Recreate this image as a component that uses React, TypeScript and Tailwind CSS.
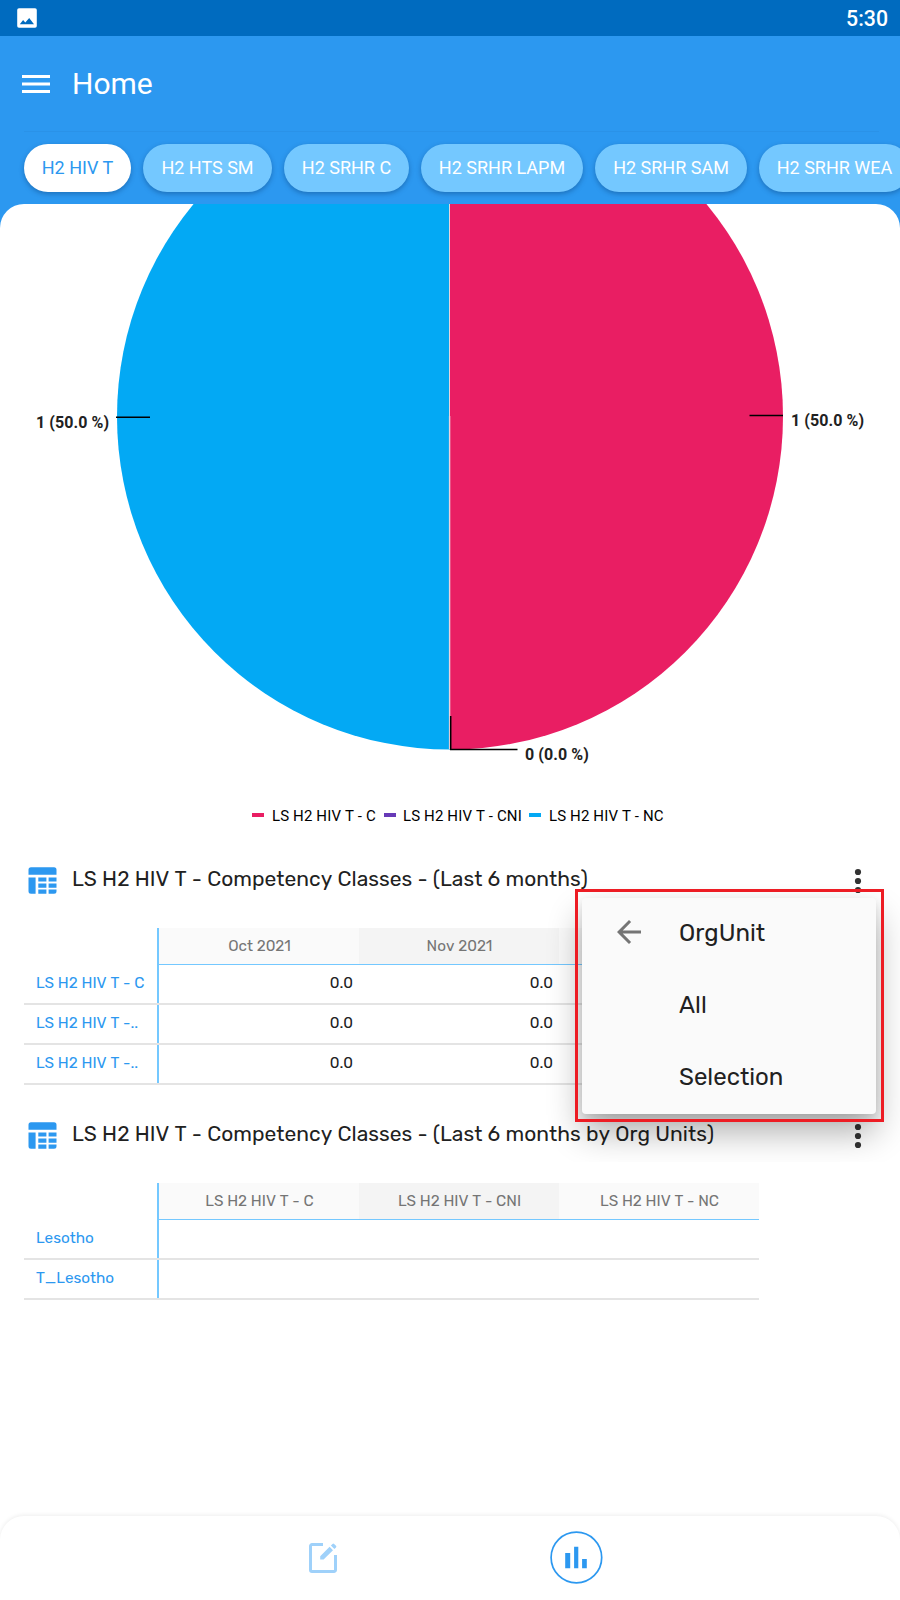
const tabs = [
  { label: "H2 HIV T", width: "w-[107px]", active: true },
  { label: "H2 HTS SM", width: "w-[129px]" },
  { label: "H2 SRHR C", width: "w-[125px]" },
  { label: "H2 SRHR LAPM", width: "w-[162px]" },
  { label: "H2 SRHR SAM", width: "w-[152px]" },
  { label: "H2 SRHR WEA", width: "w-[151px]" },
];

const legend = [
  { label: "LS H2 HIV T - C", color: "bg-[#e91e63]", gap: "mr-2", width: "w-[112px]" },
  { label: "LS H2 HIV T - CNI", color: "bg-[#673ab7]", gap: "mr-[7px]", width: "w-[126px]" },
  { label: "LS H2 HIV T - NC", color: "bg-[#03a9f4]", gap: "mr-2", width: "w-[120px]" },
];

function StatusBar() {
  return (
    <div className="flex h-9 items-center justify-between bg-[#006bbf] pl-[17px] pr-[12px] text-white">
      <svg className="h-5 w-5" viewBox="0 0 20 20">
        <rect x="0.2" y="0.2" width="19.6" height="19.6" rx="1.8" fill="#fff" />
        <path d="M2.8 16.2 6.1 12l2.2 2.5L12.2 10 17 16.2z" fill="#006bbf" />
      </svg>
      <span className="pt-[2px] text-[21.3px] font-medium leading-none">5:30</span>
    </div>
  );
}

function AppBar() {
  return (
    <header className="flex h-[95px] items-center pl-[22px] text-white">
      <svg className="mt-[1px] h-[18px] w-7" viewBox="0 0 28 18" fill="#fff">
        <rect width="28" height="3" />
        <rect y="7.5" width="28" height="3" />
        <rect y="15" width="28" height="3" />
      </svg>
      <h1 className="ml-[22px] text-[30px] font-normal leading-none">Home</h1>
    </header>
  );
}

function TabStrip() {
  return (
    <div>
      <div className="ml-6 mr-[21px] h-px bg-[#2a92e8]" />
      <nav className="flex gap-3 overflow-hidden pb-3 pl-6 pt-3">
        {tabs.map((t) => (
          <button
            key={t.label}
            className={`h-12 shrink-0 whitespace-nowrap rounded-full pb-[2px] text-[18px] shadow-[0_2px_5px_rgba(0,40,90,0.35)] ${t.width} ${
              t.active ? "bg-white text-[#2c98f0]" : "bg-[#74c8ff] text-white"
            }`}
          >
            {t.label}
          </button>
        ))}
      </nav>
    </div>
  );
}

function PieChart() {
  return (
    <section className="h-[632px]">
      <svg className="block h-[590px] w-full" viewBox="0 204 900 590">
        <path d="M450 83.5a333 333 0 0 0 0 666z" fill="#03a9f4" />
        <path d="M450 83.5a333 333 0 0 1 0 666z" fill="#e91e63" />
        <path d="M449.5 204V416" stroke="#e3d5dc" strokeWidth="1" />
        <path d="M449.6 416V749" stroke="#ead3dc" strokeWidth="1.4" />
        <g fill="none" stroke="#000" strokeWidth="1.5">
          <path d="M116 417.2H150" />
          <path d="M749.5 415.6H783" />
          <path d="M450.7 716V749.4H517.5" />
        </g>
        <g fill="#212121" fontSize="16" fontWeight="700" letterSpacing="0.08">
          <text x="36" y="427.9">1 (50.0 %)</text>
          <text x="791" y="425.9">1 (50.0 %)</text>
          <text x="525" y="760.1">0 (0.0 %)</text>
        </g>
      </svg>
      <div className="flex h-11 items-center pl-[252px] text-[15px] tracking-[0.13px] text-black [font-kerning:none]">
        {legend.map((l) => (
          <div key={l.label} className="flex items-center">
            <span className={`mb-[2px] h-1 w-3 ${l.gap} ${l.color}`} />
            <span className={`whitespace-nowrap ${l.width}`}>{l.label}</span>
          </div>
        ))}
      </div>
    </section>
  );
}

function TableIcon() {
  return (
    <svg className="mb-[2px] h-[27px] w-[29px]" viewBox="0 0 29 27" fill="#2c98f0">
      <path d="M3 0.2h23a2.5 2.5 0 0 1 2.5 2.5V7.8H.5V2.7A2.5 2.5 0 0 1 3 .2z" />
      <path d="M.5 10.4H7.6V26.8H3A2.5 2.5 0 0 1 .5 24.3z" />
      <path d="M10.3 10.4h8.1v4.2h-8.1zM20.6 10.4h7.9v4.2h-7.9z" />
      <path d="M10.3 16.5h8.1v4.2h-8.1zM20.6 16.5h7.9v4.2h-7.9z" />
      <path d="M10.3 22.6h8.1v4.2h-8.1zM20.6 22.6h7.9v1.7a2.5 2.5 0 0 1-2.5 2.5h-5.4z" />
    </svg>
  );
}

function MoreIcon() {
  return (
    <svg className="h-9 w-9" viewBox="0 0 36 36" fill="#333">
      <circle cx="18" cy="9" r="3.1" />
      <circle cx="18" cy="18" r="3.1" />
      <circle cx="18" cy="27" r="3.1" />
    </svg>
  );
}

function DataTable({ title, columns, rows }: { title: string; columns: string[]; rows: { label: string; values: string[] }[] }) {
  return (
    <section className="font-['Rubik','Roboto',sans-serif] [font-kerning:none]">
      <div className="flex h-[92px] items-center pb-[2px] pl-7 pr-6">
        <TableIcon />
        <h2 className="mb-[5px] ml-[15px] flex-1 whitespace-nowrap text-[21px] font-normal tracking-[0.03px] text-[#212121]">{title}</h2>
        <MoreIcon />
      </div>
      <div className="ml-6 w-[735px] text-[15.3px]">
        <div className="flex h-[37px] pl-[133px]">
          <div className="w-[2px] bg-[#74c8ff]" />
          {columns.map((c, i) => (
            <div
              key={i}
              className={`flex w-[200px] items-center justify-center border-b border-[#74c8ff] pl-px pt-px text-[#757575] ${
                i % 2 ? "bg-[#f4f4f4]" : "bg-[#fafafa]"
              }`}
            >
              {c}
            </div>
          ))}
        </div>
        {rows.map((r, i) => (
          <div key={i} className="flex h-10 border-b-2 border-[#e4e4e4]">
            <div className="flex w-[133px] items-center whitespace-nowrap pb-px pl-3 text-[#2c98f0]">{r.label}</div>
            <div className="w-[2px] bg-[#74c8ff]" />
            {r.values.map((v, j) => (
              <div key={j} className="flex w-[200px] items-center justify-end pb-px pr-[6px] text-[#212121]">
                {v}
              </div>
            ))}
          </div>
        ))}
      </div>
    </section>
  );
}

function OrgUnitMenu() {
  return (
    <div className="absolute left-[530px] top-[850px] h-[312px] w-[370px] overflow-hidden font-['Rubik','Roboto',sans-serif] [font-kerning:none]">
      <div className="ml-[52px] mt-12 h-[216px] w-[294px] rounded-[4px] bg-[#fafafa] text-[24px] text-[#212121] shadow-[0_18px_34px_rgba(0,0,0,0.32),0_4px_8px_rgba(0,0,0,0.1)]">
        <div className="flex h-[72px] items-center pb-[3px] pl-[29px]">
          <svg className="mb-px h-9 w-9" viewBox="0 0 24 24" fill="#757575">
            <path d="M20 11H7.83l5.59-5.59L12 4l-8 8 8 8 1.41-1.41L7.83 13H20v-2z" />
          </svg>
          <span className="ml-8">OrgUnit</span>
        </div>
        <div className="flex h-[72px] items-center pb-[3px] pl-[97px]">All</div>
        <div className="flex h-[72px] items-center pb-[3px] pl-[97px]">Selection</div>
      </div>
      <div className="absolute left-[45px] top-[39px] h-[233px] w-[309px] border-[3px] border-[#ed1c24]" />
    </div>
  );
}

function BottomNav() {
  return (
    <nav className="flex h-[84px] items-center rounded-t-[24px] bg-white pl-[309px] shadow-[0_-1px_4px_rgba(0,0,0,0.07)]">
      <svg className="h-[30px] w-7" viewBox="0 0 28 30">
        <path d="M14 1.5H3A1.5 1.5 0 0 0 1.5 3V27A1.5 1.5 0 0 0 3 28.5H25A1.5 1.5 0 0 0 26.5 27V12" fill="none" stroke="#9fd1fa" strokeWidth="3" />
        <path d="M11.2 13.2 20.6 3.8 24 7.2 14.6 16.6H11.2zM21.9 2.5 23.5.9q.8-.8 1.6 0l1.9 1.9q.8.8 0 1.6L25.4 6z" fill="#9fd1fa" />
      </svg>
      <svg className="mb-px ml-[213px] h-[53px] w-[53px]" viewBox="0 0 53 53">
        <circle cx="26.4" cy="26.5" r="25.3" fill="#fff" stroke="#2c98f0" strokeWidth="1.7" />
        <path d="M15.2 22h5v15.3h-5zM24.1 15.7h4.2v21.6h-4.2zM32.1 28h4.7v9.3h-4.7z" fill="#2c98f0" />
      </svg>
    </nav>
  );
}

export default function App() {
  return (
    <div className="relative flex h-[1600px] w-[900px] flex-col overflow-hidden bg-[#2c98f0] font-['Roboto',sans-serif]">
      <StatusBar />
      <AppBar />
      <TabStrip />
      <main className="flex flex-1 flex-col overflow-hidden rounded-t-[24px] bg-white">
        <div className="flex-1">
          <PieChart />
          <DataTable
            title="LS H2 HIV T - Competency Classes - (Last 6 months)"
            columns={["Oct 2021", "Nov 2021", ""]}
            rows={[
              { label: "LS H2 HIV T - C", values: ["0.0", "0.0"] },
              { label: "LS H2 HIV T -..", values: ["0.0", "0.0"] },
              { label: "LS H2 HIV T -..", values: ["0.0", "0.0"] },
            ]}
          />
          <div className="h-[6px]" />
          <DataTable
            title="LS H2 HIV T - Competency Classes - (Last 6 months by Org Units)"
            columns={["LS H2 HIV T - C", "LS H2 HIV T - CNI", "LS H2 HIV T - NC"]}
            rows={[
              { label: "Lesotho", values: [] },
              { label: "T_Lesotho", values: [] },
            ]}
          />
        </div>
        <BottomNav />
      </main>
      <OrgUnitMenu />
    </div>
  );
}
